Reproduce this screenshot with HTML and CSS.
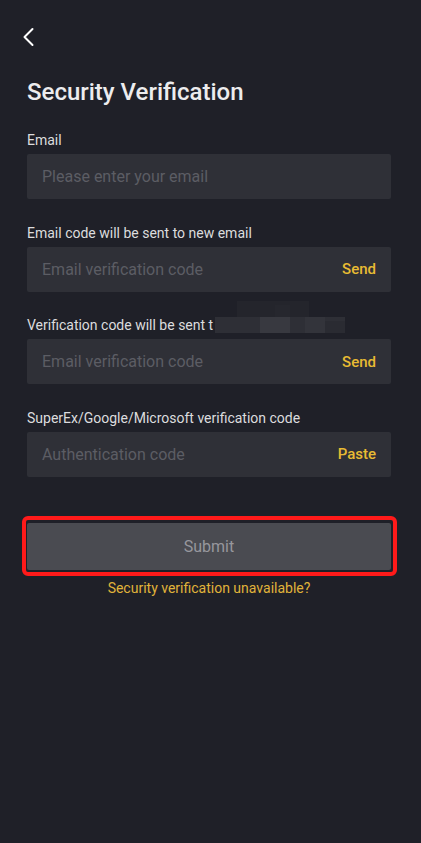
FILE: index.html
```html
<!DOCTYPE html>
<html lang="en">
<head>
<meta charset="utf-8">
<title>Security Verification</title>
<link rel="stylesheet" href="styles.css">
</head>
<body>
<div class="page">
  <header class="topbar">
    <button class="back" aria-label="Back">
      <svg width="14" height="20" viewBox="0 0 14 20"><path d="M10.5 2 L2.5 10 L10.5 18" fill="none" stroke="#fff" stroke-width="2" stroke-linecap="round" stroke-linejoin="round"/></svg>
    </button>
  </header>
  <h1 class="title">Security Verification</h1>
  <form class="form">
    <div class="field">
      <label class="label">Email</label>
      <div class="input"><span class="ph">Please enter your email</span></div>
    </div>
    <div class="field">
      <label class="label">Email code will be sent to new email</label>
      <div class="input"><span class="ph">Email verification code</span><span class="action">Send</span></div>
    </div>
    <div class="field">
      <label class="label masked">Verification code will be sent t
        <span class="blur" aria-hidden="true">
          <span class="px px1"></span><span class="px px2"></span><span class="px px3"></span><span class="px px4"></span><span class="px px5"></span><span class="px px6"></span>
        </span>
      </label>
      <div class="input"><span class="ph">Email verification code</span><span class="action">Send</span></div>
    </div>
    <div class="field">
      <label class="label">SuperEx/Google/Microsoft verification code</label>
      <div class="input"><span class="ph">Authentication code</span><span class="action">Paste</span></div>
    </div>
    <div class="submit-wrap">
      <button type="button" class="submit">Submit</button>
    </div>
    <a class="help" href="#">Security verification unavailable?</a>
  </form>
</div>
</body>
</html>
```
FILE: styles.css
```css
* { box-sizing: border-box; }
html, body { margin: 0; padding: 0; background: #1f2028; }
body {
  font-family: Roboto, "Noto Sans", "Liberation Sans", sans-serif;
  color: #e6e6e8;
  width: 421px;
  min-height: 843px;
}
.page { padding: 0 30px 0 27px; }
.topbar { height: 72px; display: flex; align-items: flex-start; padding-top: 26px; margin-left: -8px; }
.back { background: none; border: 0; padding: 0; width: 20px; height: 22px; display: flex; align-items: center; justify-content: center; }
.title { margin: 0; font-size: 24px; font-weight: 500; line-height: 40px; color: #ececee; letter-spacing: 0; }
.form { display: flex; flex-direction: column; margin-top: 18px; }
.field { display: flex; flex-direction: column; margin-bottom: 23.5px; }
.label { position: relative; font-size: 14px; line-height: 20px; color: #dcdcde; margin-bottom: 4px; }
.input {
  height: 45px;
  background: #2f3037;
  border-radius: 2px;
  display: flex;
  align-items: center;
  justify-content: space-between;
  padding: 0 15px;
}
.ph { font-size: 16px; color: #5c5d64; }
.action { font-size: 15px; color: #e8bb33; font-weight: 500; }
.blur { position: absolute; left: 188px; top: -14px; width: 130px; height: 32px; display: block; }
.px { position: absolute; display: block; }
.px1 { left: 22px; top: 0; width: 72px; height: 16px; background: #24252c; }
.px2 { left: 0; top: 16px; width: 130px; height: 16px; background: #2e2f36; }
.px3 { left: 45px; top: 16px; width: 30px; height: 16px; background: #383940; }
.px4 { left: 90px; top: 16px; width: 20px; height: 16px; background: #33343b; }
.px5 { left: 60px; top: 4px; width: 15px; height: 12px; background: #26272e; }
.px6 { left: 110px; top: 20px; width: 20px; height: 12px; background: #2a2b32; }
.submit-wrap {
  margin: 16px -6px 0 -5px;
  border: 4px solid #ff1a1a;
  border-radius: 6px;
  padding: 3px 2px 2px 1px;
}
.submit {
  display: block;
  width: 100%;
  height: 47px;
  background: #4a4b51;
  border: 0;
  border-radius: 2px;
  color: #97979d;
  font-family: inherit;
  font-size: 16px;
}
.help { margin-top: 4px; text-align: center; color: #e0b33a; font-size: 14px; text-decoration: none; }
```
